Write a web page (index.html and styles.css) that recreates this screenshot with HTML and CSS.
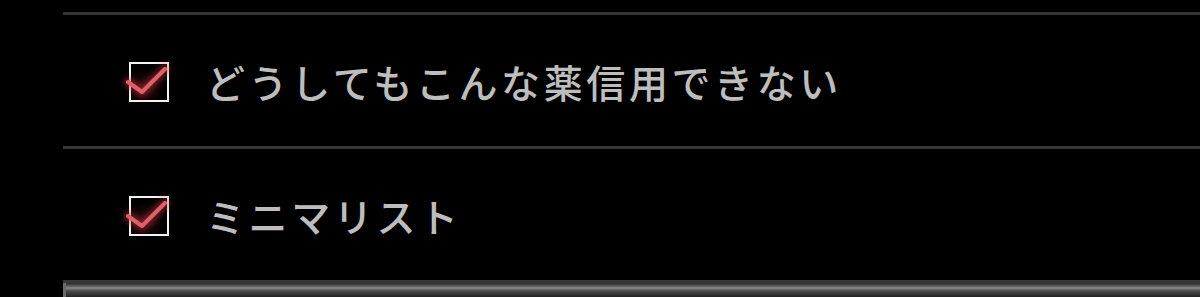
FILE: index.html
```html
<!DOCTYPE html>
<html lang="ja">
<head>
    <meta charset="UTF-8">
    <meta name="viewport" content="width=device-width, initial-scale=1.0">
    <title>チェックリスト</title>
    <link rel="stylesheet" href="styles.css">
</head>
<body>
    <div class="list">
        <div class="top-line"></div>
        <div class="item">
            <span class="check">
                <svg viewBox="0 0 38 38" width="38" height="38">
                    <path class="glow" d="M-1 20 L13 30 L36 7" />
                    <path class="mark" d="M-1 20 L13 30 L36 7" />
                </svg>
            </span>
            <span class="label">どうしてもこんな薬信用できない</span>
        </div>
        <div class="item">
            <span class="check">
                <svg viewBox="0 0 38 38" width="38" height="38">
                    <path class="glow" d="M-1 20 L13 30 L36 7" />
                    <path class="mark" d="M-1 20 L13 30 L36 7" />
                </svg>
            </span>
            <span class="label">ミニマリスト</span>
        </div>
        <div class="bottom-bar"></div>
    </div>
</body>
</html>
```

FILE: styles.css
```css
* {
    box-sizing: border-box;
}

body {
    margin: 0;
    background: #000;
    font-family: "Noto Sans CJK JP", "Noto Sans", sans-serif;
}

.list {
    margin-left: 63px;
    padding-top: 12px;
}

.top-line {
    height: 3px;
    background: #353535;
}

.item {
    height: 134px;
    border-bottom: 3px solid #373737;
    display: flex;
    align-items: center;
    padding-left: 66px;
    padding-top: 2px;
}

.check {
    width: 40px;
    height: 40px;
    border: 2.5px solid #f4f4f4;
    position: relative;
    flex-shrink: 0;
    background: radial-gradient(circle at 40% 65%, rgba(120, 20, 30, 0.35), transparent 60%);
}

.check svg {
    position: absolute;
    left: -2px;
    top: -2px;
    overflow: visible;
}

.check .glow {
    fill: none;
    stroke: #b8343e;
    stroke-width: 9;
    stroke-linecap: round;
    stroke-linejoin: round;
    opacity: 0.6;
    filter: blur(3px);
}

.check .mark {
    fill: none;
    stroke: #e0606a;
    stroke-width: 4;
    stroke-linecap: round;
    stroke-linejoin: round;
    filter: blur(0.7px);
}

.label {
    margin-left: 37px;
    font-size: 39px;
    font-weight: 500;
    letter-spacing: 3.6px;
    color: #bdbdbd;
    line-height: 1;
}

.bottom-bar {
    height: 20px;
    background: linear-gradient(#2a2a2a 0, #5a5a5a 3px, #8a8a8a 5px, #4a4a4a 8px, #222 14px, #1a1a1a 20px);
    border-left: 3px solid #6a6a6a;
}
```
